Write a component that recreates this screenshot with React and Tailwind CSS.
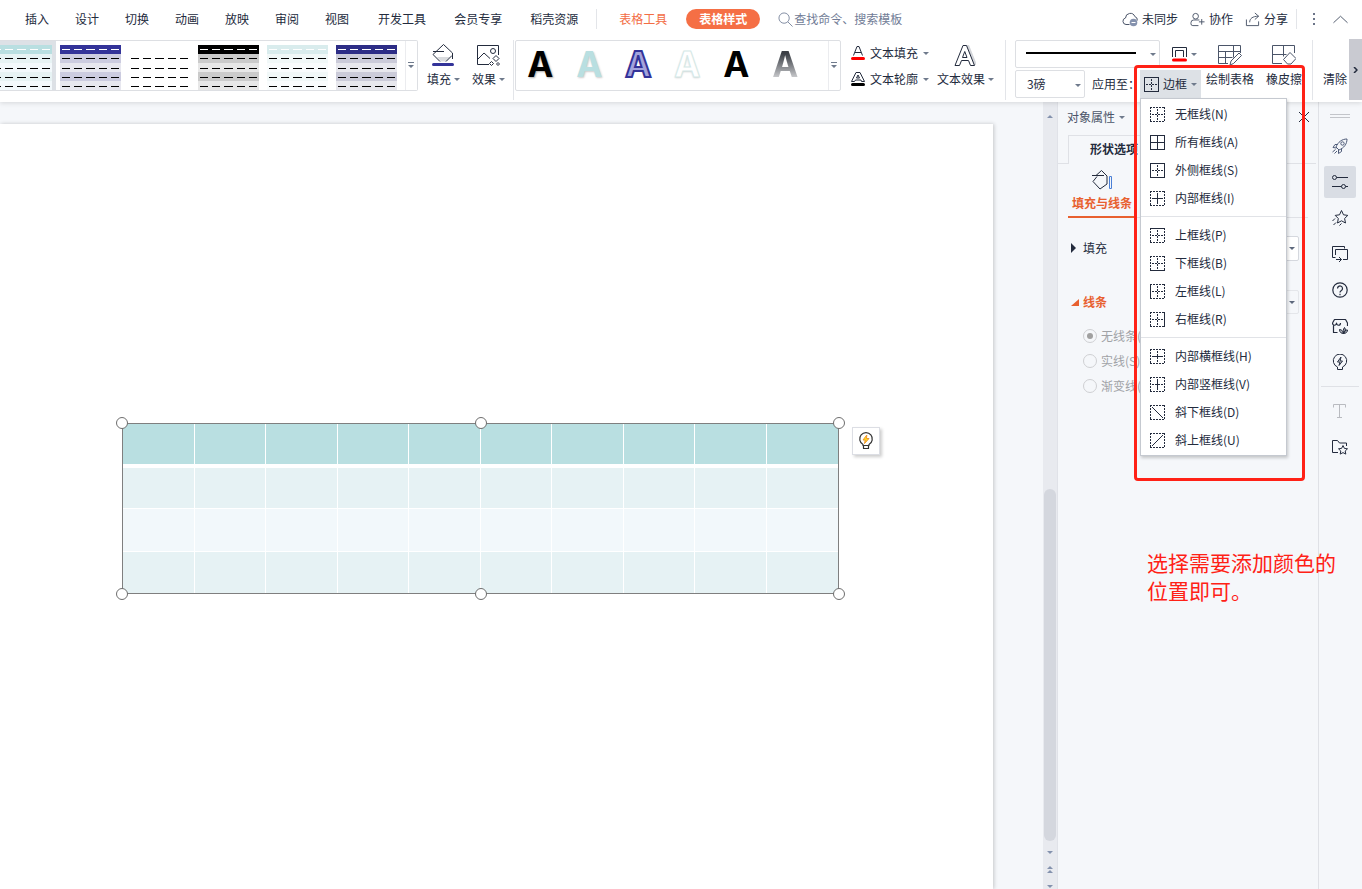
import React from 'react'
import clsx from 'clsx'

const tabs = ['插入', '设计', '切换', '动画', '放映', '审阅', '视图']
const longTabs = ['开发工具', '会员专享', '稻壳资源']

const tableStyles = [
  { name: '中度样式 1', colors: ['#b9dfe1', '#e7f3f4', '#f3f9fc', '#e7f3f4', '#f3f9fc'], dash: '#fff', selected: true },
  { name: '中度样式 2', colors: ['#333399', '#cccce0', '#e7e7ef', '#cccce0', '#e7e7ef'], dash: '#fff' },
  { name: '无样式', colors: ['#fff', '#fff', '#fff', '#fff', '#fff'], dash: '#fff' },
  { name: '中度样式 3', colors: ['#000', '#cbcbcb', '#e7e7e7', '#cbcbcb', '#e7e7e7'], dash: '#fff' },
  { name: '中度样式 4', colors: ['#d9eced', '#f1f8f8', '#f9fcfd', '#f1f8f8', '#f9fcfd'], dash: '#fff' },
  { name: '中度样式 5', colors: ['#2d2d86', '#cbcbd9', '#e7e7ed', '#cbcbd9', '#e7e7ed'], dash: '#fff' },
]

const textStyles = [
  'text-black [text-shadow:1px_1px_2px_#0005]',
  'text-[#b9dfe1] [text-shadow:1px_1px_2px_#0003]',
  'text-[#a3a3dc] [-webkit-text-stroke:2px_#333399]',
  'text-white [-webkit-text-stroke:1px_#d5e9e8] [text-shadow:0_1px_2px_#0003]',
  'text-black',
  'text-transparent bg-clip-text bg-linear-to-b from-[#3c4046] from-25% to-[#c4c5c8] to-80%',
]

// sides: t, b, l, r = outer edges, h, v = inner lines, d, u = diagonals
const menuGroups = [
  [
    { label: '无框线(N)', solid: '' },
    { label: '所有框线(A)', solid: 'tblrhv' },
    { label: '外侧框线(S)', solid: 'tblr' },
    { label: '内部框线(I)', solid: 'hv' },
  ],
  [
    { label: '上框线(P)', solid: 't' },
    { label: '下框线(B)', solid: 'b' },
    { label: '左框线(L)', solid: 'l' },
    { label: '右框线(R)', solid: 'r' },
  ],
  [
    { label: '内部横框线(H)', solid: 'h' },
    { label: '内部竖框线(V)', solid: 'v' },
    { label: '斜下框线(D)', solid: 'd' },
    { label: '斜上框线(U)', solid: 'u' },
  ],
]

const Caret = ({ up, className = 'text-[#6f7a8c]' }) => (
  <svg className={clsx('shrink-0', className)} width="6" height="3" viewBox="0 0 6 3" fill="currentColor" aria-hidden="true">
    <path d={up ? 'M0 3h6L3 0z' : 'M0 0h6L3 3z'} />
  </svg>
)

const MoreIcon = () => (
  <svg width="6" height="7" viewBox="0 0 6 7" fill="#6f7a8c" aria-hidden="true">
    <path d="M0 0h6v1H0zM0 3h6L3 6z" />
  </svg>
)

const Icon = ({ size = 16, box = 16, className, children }) => (
  <svg
    className={clsx('shrink-0', className)}
    width={size}
    height={size}
    viewBox={`0 0 ${box} ${box}`}
    fill="none"
    stroke="currentColor"
    strokeLinejoin="round"
    aria-hidden="true"
  >
    {children}
  </svg>
)

const BorderIcon = ({ solid }) => {
  const all = solid.includes('t') && solid.includes('h')
  const diagonal = solid === 'd' || solid === 'u'
  const dash = (side) => (solid.includes(side) ? undefined : '2 1')
  return (
    <svg className="shrink-0" width="15" height="15" viewBox="0 0 15 15" fill="none" stroke="#232b3d" aria-hidden="true">
      <path d="M0 .5h15" strokeDasharray={dash('t')} />
      <path d="M0 14.5h15" strokeDasharray={dash('b')} />
      <path d="M.5 0v15" strokeDasharray={dash('l')} />
      <path d="M14.5 0v15" strokeDasharray={dash('r')} />
      {!diagonal && <path d={all ? 'M0 7.5h15' : 'M2 7.5h11'} strokeDasharray={dash('h')} />}
      {!diagonal && <path d={all ? 'M7.5 0v15' : 'M7.5 2v11'} strokeDasharray={dash('v')} />}
      {solid === 'd' && <path d="M2 2l11 11" />}
      {solid === 'u' && <path d="M2 13L13 2" />}
    </svg>
  )
}

const StyleThumb = ({ colors, dash }) => (
  <svg width="61" height="45" viewBox="0 0 61 45" aria-hidden="true">
    {colors.map((c, i) => (
      <rect key={i} y={i * 9} width="61" height="9" fill={c} />
    ))}
    {[4, 13, 23, 32, 41].map((y, i) => (
      <path
        key={y}
        d={`M2 ${y + 0.5}h8m4 0h8m4 0h9m4 0h8m4 0h8`}
        stroke={i === 0 ? dash : '#000'}
      />
    ))}
  </svg>
)

const BigButton = ({ label, caret, className, children }) => (
  <button type="button" className={clsx('flex shrink-0 flex-col items-center gap-1 self-start pt-1', className)}>
    <span className="flex h-[22px] items-center justify-center">{children}</span>
    <span className="flex items-center gap-[3px] leading-[18px] whitespace-nowrap">
      {label}
      {caret && <Caret />}
    </span>
  </button>
)

const Divider = ({ className }) => <div className={clsx('w-px shrink-0 bg-[#e3e5e9]', className)} />

function TabBar() {
  return (
    <nav className="flex h-10 items-center pb-0.5 pl-[25px] text-[#232b3d]">
      <div className="flex gap-[26px]">
        {tabs.map((t) => <button key={t} type="button">{t}</button>)}
      </div>
      <div className="ml-[29px] flex gap-7">
        {longTabs.map((t) => <button key={t} type="button" className="whitespace-nowrap">{t}</button>)}
      </div>
      <Divider className="ml-[18px] h-5" />
      <button type="button" className="ml-[22px] whitespace-nowrap text-[#f36d44]">表格工具</button>
      <button type="button" className="ml-[19px] h-5 rounded-full bg-[#f56f45] px-[13px] font-bold whitespace-nowrap text-white">
        表格样式
      </button>
      <label className="ml-[18px] flex items-center gap-px text-[#7c879e]">
        <Icon size={15}>
          <circle cx="6.5" cy="6.5" r="5.5" />
          <path d="M10.5 10.5l5 5" />
        </Icon>
        <input
          type="text"
          aria-label="搜索"
          placeholder="查找命令、搜索模板"
          className="w-[120px] bg-transparent outline-none placeholder:text-[#717c96]"
        />
      </label>
      <div className="ml-auto flex items-center gap-3 pr-3.5">
        <button type="button" className="flex items-center gap-1 whitespace-nowrap">
          <Icon className="text-[#4b5569]">
            <path d="M7.500 13.500H4A3.300 3.300 0 0 1 3.500 7 4.800 4.800 0 0 1 12.800 5.500 3.700 3.700 0 0 1 15.300 9.500" />
            <circle cx="11.500" cy="11.500" r="3.800" fill="#8592ae" stroke="none" />
            <path d="M9.500 11.500h4" stroke="#fff" />
          </Icon>
          未同步
        </button>
        <button type="button" className="flex items-center gap-1 whitespace-nowrap">
          <Icon size={15} className="text-[#4b5569]">
            <circle cx="6" cy="4.500" r="3" />
            <path d="M9 14.500H3a2 2 0 0 1-2-2v-1a3 3 0 0 1 3-3h6M12.500 7.500v6M9.500 10.500h6" />
          </Icon>
          协作
        </button>
        <button type="button" className="flex items-center gap-1 whitespace-nowrap">
          <Icon size={15} className="text-[#4b5569]">
            <path d="M1.500 8v6.500h13V10M5 11c0-4 3-6.500 9.500-6.500M10.500 1l4 3.500-4 3.500" />
          </Icon>
          分享
        </button>
        <Divider className="-ml-1 h-5" />
        <button type="button" aria-label="更多" className="pr-1.5 pl-1">
          <svg width="2" height="13" viewBox="0 0 2 13" fill="#6b7488" aria-hidden="true">
            <path d="M0 0h2v2H0zM0 5h2v2H0zM0 10h2v2H0z" />
          </svg>
        </button>
        <button type="button" aria-label="收起功能区">
          <Icon size={15} className="text-[#4b5569]">
            <path d="M.500 11.500L8 4.500l7.500 7" />
          </Icon>
        </button>
      </div>
    </nav>
  )
}

function BorderMenu() {
  return (
    <div role="menu" className="absolute top-full left-0 w-[147px] border border-[#c5c9d0] bg-white py-px shadow-[1px_2px_3px_#0003]">
      {menuGroups.map((group, i) => (
        <div key={i}>
          {i > 0 && <div className="my-1 h-px bg-[#e1e3e7]" />}
          {group.map((item) => (
            <button
              key={item.label}
              type="button"
              role="menuitem"
              className="flex h-7 w-full items-center gap-2.5 pl-[9px] whitespace-nowrap hover:bg-gray-100"
            >
              <BorderIcon solid={item.solid} />
              {item.label}
            </button>
          ))}
        </div>
      ))}
    </div>
  )
}

function Ribbon() {
  return (
    <div className="flex h-[62px] text-[#232b3d]">
      {/* table style gallery */}
      <div className="flex h-[51px] min-w-0 flex-1 rounded-r-xs border border-l-0 border-[#dddfe3]">
        <div className="flex min-w-0 flex-1 justify-end overflow-hidden pr-1">
          {tableStyles.map((s) => (
            <button
              key={s.name}
              type="button"
              aria-label={s.name}
              className={clsx('flex shrink-0 items-end px-1', s.selected && 'bg-[#dde1e6]')}
            >
              <StyleThumb colors={s.colors} dash={s.dash} />
            </button>
          ))}
        </div>
        <button type="button" aria-label="更多表格样式" className="flex w-3 items-center justify-center border-l border-[#ebecef]">
          <MoreIcon />
        </button>
      </div>

      <BigButton label="填充" caret className="ml-[3px] w-[45px]">
        <Icon size={22} box={22}>
          <path d="M4 9l7.500-7.500 7 7L20 9v5l-6 3H8l-6-6z" fill="#fff" stroke="none" />
          <path d="M5 13h13l-4 4.500H9z" fill="#d9dbde" stroke="none" />
          <path d="M1 7.500h11M8 17.500L1 10.500l10.500-10 9 8.500v6M14 17.500l6-6" />
          <path d="M1.500 20.500h19" stroke="#333399" strokeWidth="3" strokeLinecap="round" />
        </Icon>
      </BigButton>
      <BigButton label="效果" caret className="w-[45px]">
        <Icon size={24} box={24}>
          <path d="M13 21.500H1.500v-19h21V12" />
          <path d="M2 16l6-6 6 5.500" />
          <circle cx="17" cy="8" r="2.500" />
          <path d="M20 12.500l3 3-3 3-3-3zM15.500 18.500l2 2-2 2-2-2zM22 19.500l1.500 1.500-1.500 1.500-1.500-1.500z" />
        </Icon>
      </BigButton>
      <Divider className="ml-0.5 h-[60px]" />

      {/* text style gallery */}
      <div className="ml-px flex h-[51px] w-[326px] shrink-0 rounded-xs border border-[#dddfe3]">
        <div className="flex flex-1 font-['Inter',sans-serif] text-[35px] leading-[47px] font-bold">
          {textStyles.map((style, i) => (
            <button key={i} type="button" aria-label={`艺术字样式 ${i + 1}`} className="w-[49px] self-start">
              <span className={style}>A</span>
            </button>
          ))}
        </div>
        <button type="button" aria-label="更多艺术字样式" className="ml-auto flex w-3 items-center justify-center border-l border-[#ebecef]">
          <MoreIcon />
        </button>
      </div>

      <div className="ml-2.5 flex shrink-0 flex-col">
        <button type="button" className="flex h-[26px] items-center gap-[5px] whitespace-nowrap">
          <Icon size={14} box={14}>
            <path d="M2.500 9.500L6 .500h2l3.500 9M4 6.500h6" />
            <path d="M1.500 12.500h11" stroke="#f00" strokeWidth="3" strokeLinecap="round" />
          </Icon>
          文本填充
          <Caret />
        </button>
        <button type="button" className="flex h-[26px] items-center gap-[5px] whitespace-nowrap">
          <Icon size={14} box={14}>
            <path d="M.500 9.500L5 .500h4l4.500 9h-3l-.500-1.500H4.500l-1 1.500zM5.500 6L7 3l1.500 3z" />
            <path d="M1.500 12.500h11" stroke="#000" strokeWidth="3" strokeLinecap="round" />
          </Icon>
          文本轮廓
          <Caret />
        </button>
      </div>
      <BigButton label="文本效果" caret className="ml-2">
        <Icon size={22} box={22}>
          <path d="M12 1h3l8 20h-4z" fill="#d4d6da" stroke="none" />
          <path d="M1 21.500L9 1.500h3.500l8 20h-4l-2-5h-7l-2 5zM8.500 13.500h4.500l-2.250-6z" fill="#fff" fillRule="evenodd" />
        </Icon>
      </BigButton>
      <Divider className="ml-[11px] h-[60px]" />

      <div className="ml-[9px] flex shrink-0 flex-col gap-0.5">
        <div className="flex items-center">
          <button type="button" aria-label="线型" className="flex h-7 w-[145px] items-center rounded-xs border border-[#dddfe3] pr-[3px] pl-2.5">
            <span className="mb-0.5 h-0.5 w-[110px] bg-black" />
            <Caret className="ml-auto text-[#6f7a8c]" />
          </button>
          <button type="button" aria-label="线条颜色" className="ml-3 flex items-center gap-1">
            <Icon size={15} box={15}>
              <path d="M.500 10V.500h14V10M3.500 10V3.500h8V10" />
              <path d="M1.500 13h12" stroke="#f00" strokeWidth="3" strokeLinecap="round" />
            </Icon>
            <Caret />
          </button>
        </div>
        <div className="flex items-center">
          <div className="relative">
            <select aria-label="线宽" className="h-7 w-[70px] appearance-none rounded-xs border border-[#dddfe3] bg-white pl-[11px]">
              <option>3磅</option>
            </select>
            <Caret className="pointer-events-none absolute top-3.5 right-1 text-[#6f7a8c]" />
          </div>
          <span className="ml-[7px] w-12 whitespace-nowrap">应用至：</span>
          <div className="relative">
            <button type="button" aria-haspopup="menu" aria-expanded="true" className="flex h-7 w-[61px] items-center gap-1 bg-[#dde1e6] pl-1 whitespace-nowrap">
              <BorderIcon solid="tblr" />
              <span>边框</span>
              <Caret />
            </button>
            <BorderMenu />
          </div>
        </div>
      </div>

      <BigButton label="绘制表格" className="ml-[5px]">
        <Icon size={24} box={24} className="text-[#4b5569]">
          <path d="M10 20.500H.500v-18h22V10M.500 8.500h22M.500 14.500h14M7.500 8.500v12M15.500 2.500v12" />
          <path d="M12 22l1-4 8-8 2.500 2.500-8 8z" fill="#fff" />
        </Icon>
      </BigButton>
      <BigButton label="橡皮擦" className="ml-3">
        <Icon size={24} box={24} className="text-[#4b5569]">
          <path d="M10 20.500H.500v-18h22V10M.500 11.500h14M11.500 2.500v11" />
          <path d="M18 9.500l6 6-5 5.500h-3.500l-4-4.500z" fill="#fff" />
        </Icon>
      </BigButton>
      <Divider className="ml-2.5 h-[60px]" />
      <BigButton label="清除" className="ml-2.5" />
      <button type="button" aria-label="向右滚动" className="-mt-px ml-0.5 flex h-[61px] w-[13px] shrink-0 items-center justify-center bg-[#c9cad1]">
        <Icon size={6} box={6}>
          <path d="M1 0l3 3-3 3" strokeWidth="1.500" />
        </Icon>
      </button>
    </div>
  )
}

const Handle = ({ className }) => (
  <span className={clsx('absolute size-3 -translate-x-1/2 -translate-y-1/2 rounded-full border border-[#6e6e6e] bg-white', className)} />
)

function SlideCanvas() {
  const cell = 'border-r border-white last:border-r-0 p-0'
  const cols = Array.from({ length: 10 }, (_, i) => i)
  return (
    <main className="flex min-w-0 flex-1 pt-[22px] pr-[50px]">
      <div className="relative flex-1 bg-white shadow-[1px_0_4px_#0003]">
        <div className="absolute top-[299px] left-[122px]">
          <table className="h-[171px] w-[717px] table-fixed border-separate border-spacing-0 border border-[#7f7f7f]">
            <thead>
              <tr className="h-11 bg-[#b9dfe1]">
                {cols.map((c) => <th key={c} className={clsx(cell, 'border-b-4')} />)}
              </tr>
            </thead>
            <tbody>
              <tr className="h-[41px] bg-[#e6f2f4]">
                {cols.map((c) => <td key={c} className={clsx(cell, 'border-b')} />)}
              </tr>
              <tr className="h-[43px] bg-[#f2f8fb]">
                {cols.map((c) => <td key={c} className={clsx(cell, 'border-b')} />)}
              </tr>
              <tr className="h-[41px] bg-[#e6f2f4]">
                {cols.map((c) => <td key={c} className={cell} />)}
              </tr>
            </tbody>
          </table>
          <Handle className="top-0 left-0" />
          <Handle className="top-0 left-1/2" />
          <Handle className="top-0 left-full" />
          <Handle className="top-full left-0" />
          <Handle className="top-full left-1/2" />
          <Handle className="top-full left-full" />
          <button
            type="button"
            aria-label="智能提示"
            className="absolute top-1 left-[730px] flex size-7 items-center justify-center border border-[#dcdee4] bg-white shadow-[2px_2px_3px_#0003]"
          >
            <Icon size={18} box={18} className="text-[#333]">
              <path d="M6 13.500v-1A6.300 6.300 0 1 1 12 12.500v1zM6.500 13.500v3h5v-3" strokeWidth="1.200" />
              <path d="M9.800 3L6 8h2.300l-.800 3.500L12 6.500H9.500z" fill="#ffdc1e" stroke="#f0962c" />
            </Icon>
          </button>
        </div>
      </div>
    </main>
  )
}

function ScrollBar() {
  const arrow = 'text-[#8492ae]'
  return (
    <div className="flex w-[15px] shrink-0 flex-col items-center border-r border-[#e0e2e8] bg-[#e8eaef]">
      <button type="button" aria-label="向上滚动" className="flex h-7 items-center"><Caret up className={arrow} /></button>
      <div className="grow-[358]" />
      <div className="w-3 grow-[352] rounded-full bg-[#d4d7de]" />
      <button type="button" aria-label="向下滚动" className="flex h-[22px] items-center"><Caret className={arrow} /></button>
      <button type="button" aria-label="上一页" className="flex h-3 flex-col items-center justify-center gap-px">
        <Caret up className={arrow} />
        <Caret up className={arrow} />
      </button>
      <button type="button" aria-label="下一页" className="flex h-3.5 items-end pb-px"><Caret className={arrow} /></button>
    </div>
  )
}

function PropertyPanel() {
  return (
    <aside className="w-[260px] shrink-0 text-[#232b3d]">
      <div className="flex h-8 items-center gap-1 pr-[9px] pb-0.5 pl-[9px] text-[#4b5569]">
        对象属性
        <Caret />
        <button type="button" aria-label="关闭" className="ml-auto">
          <Icon size={10} box={10} className="text-[#232b3d]"><path d="M0 0l10 10M10 0L0 10" /></Icon>
        </button>
      </div>
      <div className="flex">
        <div className="w-2.5 border-b border-[#dfe1e6]" />
        <button type="button" className="mt-px h-[29px] border-t border-l border-[#dfe1e6] px-[21px] pb-0.5 font-bold">形状选项</button>
        <div className="mr-0.5 flex-1 border-b border-[#dfe1e6]" />
      </div>
      <div className="mr-2.5 ml-2.5 flex border-b border-[#dfe1e6]">
        <button type="button" className="-mb-px flex h-[54px] flex-col items-center border-b-2 border-[#e8602f] px-1 pt-1.5 font-bold text-[#e8602f]">
          <Icon size={20} box={20} className="text-[#232b3d]">
            <path d="M0 5.500h12M4 5.500L9.500.500 15 6v8l-7 5-7-7.500 4-5" />
            <path d="M17.500 6.500h2v12h-2z" stroke="#4a7fd6" />
          </Icon>
          <span className="mt-1 leading-[18px]">填充与线条</span>
        </button>
      </div>
      <div className="flex h-14 items-center pt-1 pr-[19px] pl-[13px]">
        <button type="button" className="flex items-center gap-[7px]">
          <svg width="5" height="10" viewBox="0 0 5 10" fill="currentColor" aria-hidden="true"><path d="M0 0l5 5-5 5z" /></svg>
          填充
        </button>
        <div className="relative ml-auto">
          <select aria-label="填充颜色" className="block h-[25px] w-[120px] appearance-none rounded-xs border border-[#d5d8de] bg-white" />
          <Caret className="pointer-events-none absolute top-[11px] right-1 text-[#5d687c]" />
        </div>
      </div>
      <div className="flex h-[49px] items-center pt-[7px] pr-[19px] pl-[13px]">
        <button type="button" className="flex items-center gap-1 font-bold text-[#e8602f]">
          <svg width="8" height="7" viewBox="0 0 8 7" fill="currentColor" aria-hidden="true"><path d="M8 0v7H0z" /></svg>
          线条
        </button>
        <div className="relative ml-auto">
          <select aria-label="线条样式" disabled className="block h-6 w-[120px] appearance-none rounded-xs border border-[#e4e6ea] bg-[#f5f7fa]" />
          <Caret className="pointer-events-none absolute top-[11px] right-1 text-[#5d687c]" />
        </div>
      </div>
      <fieldset className="pl-[25px] text-[#a0a2a6]">
        {['无线条(N)', '实线(S)', '渐变线(G)'].map((label, i) => (
          <label key={label} className="flex h-[25px] items-center gap-1">
            <input
              type="radio"
              name="line"
              disabled
              defaultChecked={i === 0}
              className="size-3.5 appearance-none rounded-full border border-[#cfd0d3] p-[3px] checked:bg-[#a0a0a0] checked:bg-clip-content"
            />
            {label}
          </label>
        ))}
      </fieldset>
    </aside>
  )
}

const sideTools = [
  {
    label: '快捷工具',
    icon: (
      <g stroke="#4e5b78">
        <path d="M4 9C6 4 10 1 15 1c0 5-3 9-8 11zM5.500 6.500H3L1 9.500l3.500.500M9.500 10.500v3l-3 2V12" />
        <circle cx="10.500" cy="5.500" r="1.700" />
        <path d="M3.500 11.500L.500 14M5 13l-2.500 2.500" />
      </g>
    ),
  },
  {
    label: '对象属性',
    active: true,
    icon: (
      <>
        <circle cx="2.500" cy="3.500" r="2" />
        <path d="M4.500 3.500H16M0 12.500h9.500M13.500 12.500H16" />
        <circle cx="11.500" cy="12.500" r="2" />
      </>
    ),
  },
  {
    label: '动画',
    icon: <path d="M9.500.500l2 4.300 4.300.600-3.200 3.100.900 4.500-4-2.200-4 2.200.800-4.500L3.200 5.400l4.300-.600zM3 8.500L.500 11M4 12.500L1.500 15M9.500 13.500l-2 2" />,
  },
  { label: '切换', icon: <path d="M3.500 11.500H.500v-11h12v2M8 13.500H4M11 13.500h4.500v-10h-12V9M4 13.500h5.500M7 11l2.500 2.500L7 16" /> },
  {
    label: '帮助',
    icon: (
      <>
        <circle cx="8" cy="8" r="7.200" strokeWidth="1.200" />
        <path d="M5.500 6.500a2.500 2.500 0 1 1 4 2C8.500 9 8 9.500 8 10.500M8 11.800v1.400" strokeWidth="1.200" />
      </>
    ),
  },
  {
    label: '稻壳商城',
    icon: (
      <>
        <path d="M5.500 14.500h-4V7.500M.500 5L2.500 1.500h11l2 3.500v3M.500 5c0 3 4 3 4 0 0 3 4 3 4 0" strokeWidth="1.200" />
        <path d="M11.500 15.500c-2 0-4-1-4-4 2 0 3 1 4 4zM11.500 15.500c-.500-2-.500-4 1-6 1.500 2 1 4-1 6zM11.500 15.500c0-2 2-4 4-3.500 0 2-1.500 3.500-4 3.500z" fill="currentColor" fillOpacity=".3" />
      </>
    ),
  },
  { label: '智能提示', icon: <path d="M5.500 13A6.700 6.700 0 1 1 10.500 13v2.500h-5zM9 3L5.500 8H8l-1 3.500L10.500 7H8z" /> },
]

function SideBar() {
  return (
    <aside className="flex w-11 shrink-0 flex-col items-center gap-1 border-l border-[#dfe1e6] pr-0.5 text-[#232b3d]">
      <div className="mt-3 mb-2 h-1 w-5 border-y border-[#c3c5ca]" />
      {sideTools.map((tool) => (
        <button
          key={tool.label}
          type="button"
          aria-label={tool.label}
          className={clsx('flex size-8 shrink-0 items-center justify-center rounded-xs', tool.active && 'bg-[#d9dde4]')}
        >
          <Icon>{tool.icon}</Icon>
        </button>
      ))}
      <div className="mt-1 mb-1 h-px w-[38px] bg-[#dfe1e6]" />
      <button type="button" aria-label="文字工具" className="flex size-8 items-center justify-center text-[#b9bbc0]">
        <Icon><path d="M1.500 4.500v-3h12v3M7.500 1.500v13M5 14.500h5" /></Icon>
      </button>
      <button type="button" aria-label="收藏夹" className="flex size-8 items-center justify-center">
        <Icon>
          <path d="M6 13.500H.500v-12h5l2 2.500h7v3" />
          <path d="M11 6.500l1.400 2.900 3.100.400-2.300 2.200.600 3.100-2.800-1.500-2.800 1.500.600-3.100-2.300-2.200 3.100-.400z" />
        </Icon>
      </button>
    </aside>
  )
}

export default function App() {
  return (
    <div className="relative flex min-h-screen flex-col overflow-hidden bg-[#f5f7fa] font-['Noto_Sans_CJK_SC',sans-serif] text-[12px] leading-[18px]">
      <header className="relative z-10 bg-white shadow-[0_1px_5px_#0002]">
        <TabBar />
        <Ribbon />
      </header>
      <div className="flex flex-1">
        <SlideCanvas />
        <ScrollBar />
        <PropertyPanel />
        <SideBar />
      </div>

      {/* callout drawn over the border menu */}
      <div className="pointer-events-none absolute top-[65px] right-[57px] z-20 h-[416px] w-[171px] rounded-sm border-3 border-[#ff2116]" />
      <p className="absolute top-[548px] right-[26px] z-20 w-[189px] text-[21px] leading-7 text-[#ff2116]">
        选择需要添加颜色的位置即可。
      </p>
    </div>
  )
}
